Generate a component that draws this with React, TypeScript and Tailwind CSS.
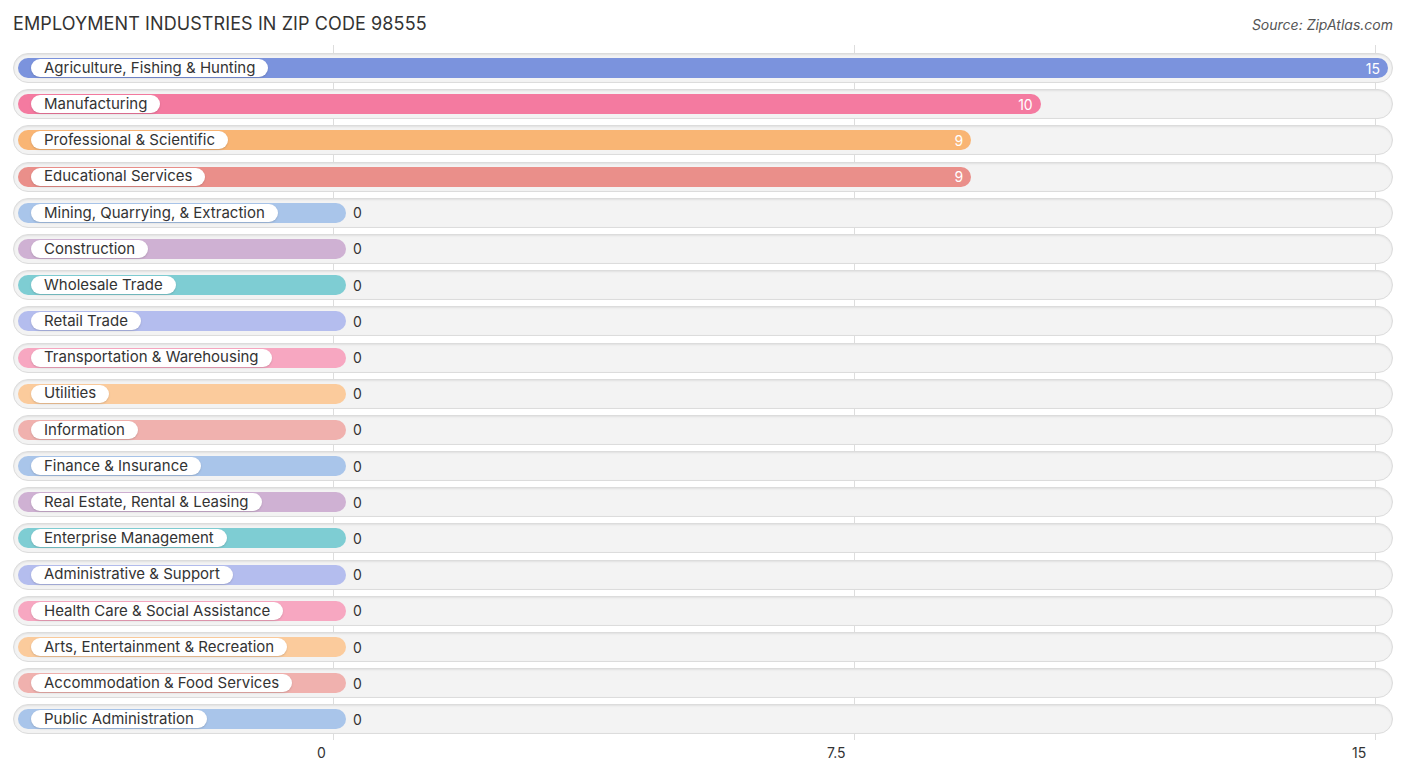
import React from 'react';

const rows: { label: string; value: number; color: string }[] = [
  { label: 'Agriculture, Fishing & Hunting', value: 15, color: '#7b93dd' },
  { label: 'Manufacturing', value: 10, color: '#f47aa0' },
  { label: 'Professional & Scientific', value: 9, color: '#f9b574' },
  { label: 'Educational Services', value: 9, color: '#ea8f8a' },
  { label: 'Mining, Quarrying, & Extraction', value: 0, color: '#a9c5ea' },
  { label: 'Construction', value: 0, color: '#cfb1d3' },
  { label: 'Wholesale Trade', value: 0, color: '#7ecdd3' },
  { label: 'Retail Trade', value: 0, color: '#b4bdee' },
  { label: 'Transportation & Warehousing', value: 0, color: '#f7a7c1' },
  { label: 'Utilities', value: 0, color: '#fbcb9c' },
  { label: 'Information', value: 0, color: '#f0b1ae' },
  { label: 'Finance & Insurance', value: 0, color: '#a9c5ea' },
  { label: 'Real Estate, Rental & Leasing', value: 0, color: '#cfb1d3' },
  { label: 'Enterprise Management', value: 0, color: '#7ecdd3' },
  { label: 'Administrative & Support', value: 0, color: '#b4bdee' },
  { label: 'Health Care & Social Assistance', value: 0, color: '#f7a7c1' },
  { label: 'Arts, Entertainment & Recreation', value: 0, color: '#fbcb9c' },
  { label: 'Accommodation & Food Services', value: 0, color: '#f0b1ae' },
  { label: 'Public Administration', value: 0, color: '#a9c5ea' },
];

export default function App() {
  return (
    <div className="relative w-[1406px] h-[776px] bg-white overflow-hidden" style={{ fontFamily: 'Inter, "Open Sans", sans-serif' }}>
      <div className="flex justify-between items-start px-[13px] pt-[10px] h-[53px]">
        <div className="text-[18px] text-[#333] tracking-[0.1px]">EMPLOYMENT INDUSTRIES IN ZIP CODE 98555</div>
        <div className="text-[14px] italic text-[#555] pr-[0px] mt-[4px]">Source: ZipAtlas.com</div>
      </div>

      {/* grid lines */}
      <div className="absolute top-[45px] left-[333px] w-px h-[695px] bg-[#ddd]" />
      <div className="absolute top-[45px] left-[854px] w-px h-[695px] bg-[#ddd]" />
      <div className="absolute top-[45px] left-[1375px] w-px h-[695px] bg-[#ddd]" />

      <div className="relative flex flex-col gap-[6.2px] pl-[13px] w-[1393px]">
        {rows.map((r) => (
          <div key={r.label} className="h-[30px] rounded-full bg-[#f3f3f3] border border-[#dcdcdc] shadow-[inset_0_1px_2px_rgba(0,0,0,0.08)] flex items-center pl-[4px]">
            <div
              className="relative h-[20px] rounded-full flex items-center justify-end"
              style={{ width: 328 + r.value * 69.47, backgroundColor: r.color }}
            >
              <div className="absolute left-[13px] top-[1px] h-[18px] bg-white rounded-full px-[13px] flex items-center text-[15px] text-[#333] whitespace-nowrap shadow-[0_1px_2px_rgba(0,0,0,0.15)]">
                {r.label}
              </div>
              {r.value > 0 && <span className="text-white text-[14px] pr-[8px]">{r.value}</span>}
              {r.value === 0 && <span className="absolute left-[335px] text-[14px] text-[#333]">0</span>}
            </div>
          </div>
        ))}
      </div>

      <div className="absolute top-[742px] left-0 w-full text-[14px] text-[#333]">
        <span className="absolute left-[317px]">0</span>
        <span className="absolute left-[827px]">7.5</span>
        <span className="absolute left-[1352px]">15</span>
      </div>
    </div>
  );
}
